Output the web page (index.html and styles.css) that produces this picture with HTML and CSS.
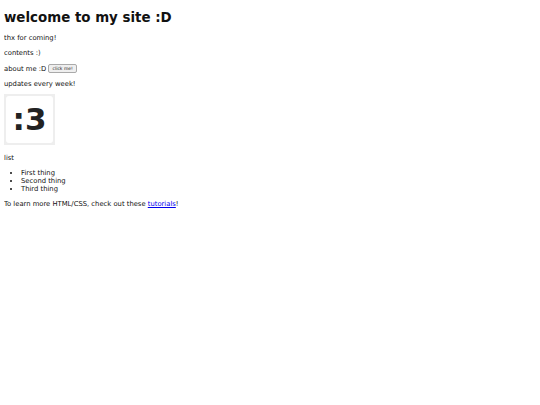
FILE: index.html
```html
<!DOCTYPE html>
<html lang="en">
    <head>
        <meta charset="utf-8">
        <title>my site</title>
        <link rel="stylesheet" href="styles.css">
    </head>
    <body>
        <h1>welcome to my site :D</h1>
        <p>thx for coming!</p>
        <p>contents :)</p>
        <p>about me :D <button class="btn">click me!</button></p>
        <p>updates every week!</p>
        <p><span class="pic"><span class="pic-inner">:3</span></span></p>
        <p>list</p>
        <ul>
            <li>First thing</li>
            <li>Second thing</li>
            <li>Third thing</li>
        </ul>
        <p>To learn more HTML/CSS, check out these <a href="#">tutorials</a>!</p>
    </body>
</html>
```

FILE: styles.css
```css
body {
    margin: 4px;
    font-family: "DejaVu Sans", Verdana, sans-serif;
    font-size: 6.8px;
    line-height: 8px;
    color: #111;
    background: #fff;
}

h1 {
    font-size: 13.4px;
    line-height: 16px;
    margin: 6px 0 8px;
}

p {
    margin: 7px 0;
}

.btn {
    font-family: "DejaVu Sans", sans-serif;
    font-size: 4.5px;
    line-height: 5px;
    padding: 1px 3px;
    background: #efefef;
    color: #222;
    border: 1px solid #aaa;
    border-radius: 2px;
    vertical-align: 1px;
}

.pic {
    display: inline-block;
    width: 51px;
    height: 51px;
    box-sizing: border-box;
    padding: 2px;
    background: #eee;
    vertical-align: bottom;
    margin: -1px 0 2px;
}

.pic-inner {
    display: flex;
    align-items: center;
    justify-content: center;
    height: 100%;
    background: #fff;
    border-radius: 3px;
    font-size: 31px;
    font-weight: bold;
    color: #222;
    line-height: 1;
}

ul {
    margin: 7px 0;
    padding-left: 17px;
}

a {
    color: #00e;
}
```
